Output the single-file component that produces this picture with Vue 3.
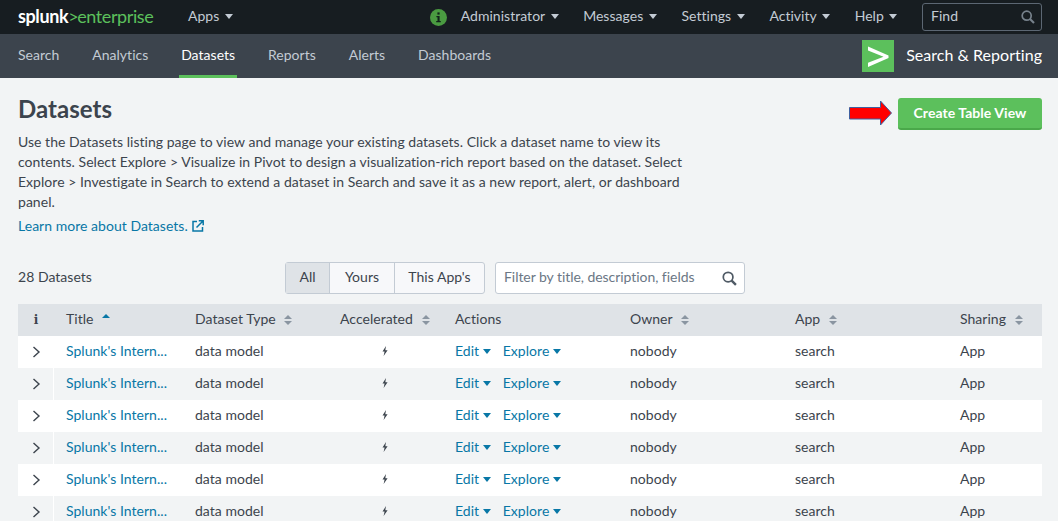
<template>
  <div class="page">
    <!-- top bar -->
    <header class="top-bar">
      <div class="logo"><span class="logo-splunk">splunk</span><span class="logo-gt">&gt;</span><span class="logo-ent">enterprise</span></div>
      <a class="top-link apps">Apps <i class="caret"></i></a>
      <div class="top-right">
        <svg class="info-dot" width="17" height="17" viewBox="0 0 17 17">
          <circle cx="8.5" cy="8.5" r="8.5" fill="#4a9b41" />
          <rect x="7.4" y="3.4" width="2.2" height="2.2" fill="#10231a" />
          <path d="M6.4 7h3.2v5h1.2v1.3H6.2V12h1.3V8.300H6.400z" fill="#10231a" />
        </svg>
        <a v-for="item in topLinks" :key="item" class="top-link">{{ item }} <i class="caret"></i></a>
        <div class="find">
          <span>Find</span>
          <svg width="14" height="14" viewBox="0 0 14 14" fill="none" stroke="#77828c" stroke-width="1.700">
            <circle cx="5.700" cy="5.700" r="4.500" />
            <path d="M9 9l4 4" stroke-width="2.200" />
          </svg>
        </div>
      </div>
    </header>

    <!-- app bar -->
    <nav class="app-bar">
      <a v-for="item in appLinks" :key="item" class="app-link" :class="{ active: item === 'Datasets' }">{{ item }}</a>
      <div class="app-name">
        <svg width="32" height="32" viewBox="0 0 32 32">
          <rect width="32" height="32" fill="#5cc05c" />
          <path d="M6 6.500L26.500 15.500V18L6 27V22.800L21.500 16.700L6 10.600z" fill="#fff" />
        </svg>
        <span>Search &amp; Reporting</span>
      </div>
    </nav>

    <main class="content">
      <div class="title-row">
        <div class="intro">
          <h1>Datasets</h1>
          <p>Use the Datasets listing page to view and manage your existing datasets. Click a dataset name to view its contents. Select Explore &gt; Visualize in Pivot to design a visualization-rich report based on the dataset. Select Explore &gt; Investigate in Search to extend a dataset in Search and save it as a new report, alert, or dashboard panel.</p>
          <a class="learn">Learn more about Datasets.
            <svg width="12" height="12" viewBox="0 0 12 12" fill="none" stroke="#0877a6" stroke-width="1.500">
              <path d="M5 1.500H1v9.500h9.500V7" />
              <path d="M4.500 7.500L10.500 1.500M6.800 .8h4.400v4.400" />
            </svg>
          </a>
        </div>
        <div class="create-wrap">
          <svg class="arrow" width="44" height="26" viewBox="0 0 44 26">
            <path d="M.5 7.500H31.500V1L42.500 13 31.500 25V19H.5z" fill="#f00" stroke="#3f5f9f" />
          </svg>
          <button class="create-btn">Create Table View</button>
        </div>
      </div>

      <div class="filter-row">
        <span class="count">28 Datasets</span>
        <div class="seg">
          <span class="seg-item on">All</span>
          <span class="seg-item">Yours</span>
          <span class="seg-item">This App's</span>
        </div>
        <div class="filter">
          <span>Filter by title, description, fields</span>
          <svg width="15" height="15" viewBox="0 0 14 14" fill="none" stroke="#4f5a65" stroke-width="1.600">
            <circle cx="5.700" cy="5.700" r="4.500" />
            <path d="M9 9l4 4" stroke-width="2.200" />
          </svg>
        </div>
      </div>

      <table class="grid">
        <colgroup>
          <col class="c-exp" /><col class="c-title" /><col class="c-type" /><col class="c-acc" /><col class="c-act" /><col class="c-owner" /><col class="c-app" /><col />
        </colgroup>
        <thead>
          <tr>
            <th class="exp"><b class="i-mark">i</b></th>
            <th>Title <i class="sort-up"></i></th>
            <th>Dataset Type <i class="sort"></i></th>
            <th>Accelerated <i class="sort"></i></th>
            <th>Actions</th>
            <th>Owner <i class="sort"></i></th>
            <th>App <i class="sort"></i></th>
            <th>Sharing <i class="sort"></i></th>
          </tr>
        </thead>
        <tbody>
          <tr v-for="n in 6" :key="n">
            <td class="exp">
              <svg width="9" height="12" viewBox="0 0 9 12" fill="none" stroke="#3c444d" stroke-width="1.400"><path d="M1.500 1l5.500 5-5.500 5" /></svg>
            </td>
            <td><a>Splunk's Intern...</a></td>
            <td>data model</td>
            <td class="bolt">
              <svg width="6" height="10" viewBox="0 0 6 10"><path d="M4 0L.5 5.600H2.600L1.600 10 5.600 4.200H3.300z" fill="#3c444d" /></svg>
            </td>
            <td><a class="action">Edit <i class="caret blue"></i></a><a class="action">Explore <i class="caret blue"></i></a></td>
            <td>nobody</td>
            <td>search</td>
            <td>App</td>
          </tr>
        </tbody>
      </table>
    </main>
  </div>
</template>

<script setup>
const topLinks = ["Administrator", "Messages", "Settings", "Activity", "Help"];
const appLinks = ["Search", "Analytics", "Datasets", "Reports", "Alerts", "Dashboards"];
</script>

<style>
html,
body {
  margin: 0;
  height: 521px;
  overflow: hidden;
  background: #f2f4f5;
}
</style>

<style scoped>
.page {
  height: 521px;
  overflow: hidden;
  font-family: Lato, "Open Sans", sans-serif;
  font-size: 14px;
  letter-spacing: 0.03px;
  color: #3c444d;
  background: #f2f4f5;
}

.top-bar {
  display: flex;
  align-items: center;
  height: 34px;
  padding: 0 16px 0 18px;
  background: #171d21;
  box-sizing: border-box;
}

.logo {
  padding-bottom: 3px;
  font-size: 18px;
  letter-spacing: -0.4px;
  width: 170px;
  white-space: nowrap;
}

.logo-splunk {
  color: #fff;
  font-weight: 700;
}

.logo-gt {
  margin-right: -1px;
  color: #5cc05c;
}

.logo-ent {
  color: #5cc05c;
}

.top-link {
  padding-bottom: 3px;
  color: #c3cbd4;
  white-space: nowrap;
}

.top-right {
  display: flex;
  align-items: center;
  margin-left: auto;
}

.top-right .top-link {
  margin-right: 24.6px;
}

.info-dot {
  margin-right: 14px;
}

.caret {
  display: inline-block;
  width: 0;
  height: 0;
  margin-left: 2px;
  vertical-align: 2px;
  border-left: 4px solid transparent;
  border-right: 4px solid transparent;
  border-top: 5px solid #c3cbd4;
}

.caret.blue {
  margin-left: 0;
  border-top-color: #0877a6;
}

.find {
  display: flex;
  align-items: center;
  justify-content: space-between;
  width: 120px;
  height: 28px;
  padding: 0 6px 0 8px;
  box-sizing: border-box;
  border: 1px solid #5c6773;
  border-radius: 3px;
  color: #c3cbd4;
}

.find span {
  padding-bottom: 3px;
}

.app-bar {
  display: flex;
  align-items: stretch;
  height: 44px;
  padding: 0 16px;
  background: #3c444d;
}

.app-link {
  display: flex;
  align-items: center;
  padding: 0 2px;
  margin-right: 28.8px;
  color: #c3cbd4;
  box-sizing: border-box;
  border-bottom: 3px solid transparent;
}

.app-link.active {
  color: #fff;
  border-bottom-color: #5cc05c;
}

.app-name {
  display: flex;
  align-items: center;
  gap: 12px;
  margin-left: auto;
  color: #fff;
  font-size: 16px;
}

.app-name span {
  padding-bottom: 3px;
}

.content {
  padding: 0 16px 0 18px;
}

.title-row {
  display: flex;
  justify-content: space-between;
}

.intro {
  width: 670px;
}

h1 {
  margin: 17px 0 0;
  font-size: 24px;
  line-height: 28px;
  font-weight: 700;
}

p {
  margin: 9px 0 0;
  line-height: 20px;
}

.learn {
  display: block;
  margin-top: 4px;
  line-height: 20px;
  color: #0877a6;
}

.learn svg {
  margin-left: 1px;
  vertical-align: -1px;
}

.create-wrap {
  display: flex;
  align-items: flex-start;
  margin-top: 20px;
  gap: 5px;
}

.arrow {
  margin-top: 2px;
}

.create-btn {
  width: 144px;
  height: 32px;
  padding: 0 0 2px;
  border: 0;
  border-bottom: 2px solid #4aa84a;
  border-radius: 3px;
  background: #5cc05c;
  color: #fff;
  font: 700 14px Lato, sans-serif;
  letter-spacing: 0.05px;
}

.filter-row {
  display: flex;
  align-items: center;
  margin-top: 26px;
  height: 32px;
}

.count {
  width: 267px;
  padding-bottom: 3px;
}

.seg {
  display: flex;
  width: 200px;
  height: 32px;
  box-sizing: border-box;
  border: 1px solid #c3cbd4;
  border-radius: 3px;
  background: #f7f8fa;
}

.seg-item {
  display: flex;
  align-items: center;
  justify-content: center;
  flex-grow: 1;
  padding: 0 0 3px;
  border-left: 1px solid #c3cbd4;
}

.seg-item:nth-child(1) {
  flex: 0 0 43px;
  border-left: 0;
}

.seg-item:nth-child(2) {
  flex: 0 0 64px;
}

.seg-item.on {
  background: #dfe3e7;
}

.filter {
  display: flex;
  align-items: center;
  justify-content: space-between;
  width: 250px;
  height: 32px;
  margin-left: 10px;
  padding: 0 7px 0 8px;
  box-sizing: border-box;
  border: 1px solid #c3cbd4;
  border-radius: 3px;
  background: #fff;
  color: #6b7785;
}

.filter span {
  padding-bottom: 3px;
  letter-spacing: -0.05px;
}

.grid {
  width: 1024px;
  margin-top: 10px;
  border-collapse: collapse;
  table-layout: fixed;
}

.c-exp { width: 36px; }
.c-title { width: 129px; }
.c-type { width: 145px; }
.c-acc { width: 115px; }
.c-act { width: 175px; }
.c-owner { width: 165px; }
.c-app { width: 165px; }

th,
td {
  height: 32px;
  padding: 0 0 3px 12px;
  box-sizing: border-box;
  text-align: left;
  font-weight: 400;
  white-space: nowrap;
}

thead tr {
  background: #dfe3e7;
}

tbody tr {
  background: #fff;
}

tbody tr:nth-child(even) {
  background: #f2f4f5;
}

tbody tr:nth-child(even) .exp {
  box-shadow: inset -1px 0 0 #fff;
}

th.exp {
  padding: 0 0 3px;
  text-align: center;
}

td.exp {
  padding: 0;
  text-align: center;
}

.i-mark {
  font-family: "DejaVu Serif", serif;
  font-size: 12px;
}

td.bolt {
  padding: 0 0 3px 54px;
}

td a {
  color: #0877a6;
}

.action {
  margin-right: 12px;
}

.sort,
.sort-up {
  display: inline-block;
  margin-left: 5px;
  width: 0;
  height: 0;
  border-left: 4px solid transparent;
  border-right: 4px solid transparent;
}

.sort {
  position: relative;
  top: -5px;
  border-bottom: 4px solid #8a95a1;
}

.sort::after {
  content: "";
  position: absolute;
  left: -4px;
  top: 6px;
  border-left: 4px solid transparent;
  border-right: 4px solid transparent;
  border-top: 4px solid #8a95a1;
}

.sort-up {
  position: relative;
  top: -6px;
  border-bottom: 4px solid #0877a6;
}
</style>
